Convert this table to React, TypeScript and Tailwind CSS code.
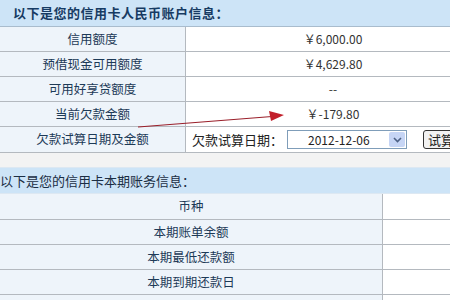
import React from 'react';

const font = { fontFamily: '"Noto Sans CJK SC", "Noto Sans", sans-serif' };

function Row({ label, children, h = 'h-[25px]' }: { label: string; children?: React.ReactNode; h?: string }) {
  return (
    <div className={`flex ${h} border-b border-[#b4b9bf]`}>
      <div className="w-[186px] shrink-0 bg-[#eef4fa] border-r border-[#b4b9bf] flex items-center justify-center text-[12.5px] text-[#1d3a57]">
        {label}
      </div>
      <div className="flex-1 bg-white flex items-center justify-center text-[12px] text-[#333]">{children}</div>
    </div>
  );
}

function BillRow({ label, h = 'h-[25px]' }: { label: string; h?: string }) {
  return (
    <div className={`flex ${h} border-b border-[#b4b9bf]`}>
      <div className="w-[383px] shrink-0 bg-[#eef4fa] border-r border-[#b4b9bf] flex items-center justify-center text-[12.5px] text-[#1d3a57]">
        {label}
      </div>
      <div className="flex-1 bg-white" />
    </div>
  );
}

export default function App() {
  return (
    <div className="relative w-[450px] h-[300px] overflow-hidden bg-white" style={font}>
      <div className="w-[480px]">
        {/* account info */}
        <div className="h-[27px] bg-[#cde4f7] border-b border-[#a9bccd] flex items-center pl-[13px] text-[13px] font-bold text-[#173b63] tracking-[0.5px]">
          以下是您的信用卡人民币账户信息：
        </div>
        <Row label="信用额度">￥6,000.00</Row>
        <Row label="预借现金可用额度">￥4,629.80</Row>
        <Row label="可用好享贷额度">--</Row>
        <Row label="当前欠款金额">￥-179.80</Row>
        <div className="flex h-[26px] border-b border-[#b4b9bf]">
          <div className="w-[186px] shrink-0 bg-[#eef4fa] border-r border-[#b4b9bf] flex items-center justify-center text-[12.5px] text-[#1d3a57]">
            欠款试算日期及金额
          </div>
          <div className="flex-1 bg-white flex items-center pl-[6px] text-[13px] text-[#222]">
            <span>欠款试算日期：</span>
            <div className="ml-[4px] w-[120px] h-[19px] border border-[#7f9db9] flex items-center bg-white">
              <span className="flex-1 pl-[20px] text-[12px]">2012-12-06</span>
              <span className="w-[16px] h-[15px] mr-[1px] bg-[#c6d5f5] rounded-[2px] flex items-center justify-center">
                <svg width="9" height="6" viewBox="0 0 9 6">
                  <path d="M1 1 L4.5 4.5 L8 1" fill="none" stroke="#4d6185" strokeWidth="1.6" />
                </svg>
              </span>
            </div>
            <div className="ml-[16px] h-[19px] px-[4px] border border-[#333] rounded-[3px] bg-[#f2f2f2] flex items-center text-[13px] shrink-0">
              试算
            </div>
          </div>
        </div>
        <div className="h-[14px] bg-[#f3f3f3]" />

        {/* bill info */}
        <div className="h-[27px] bg-[#cde4f7] border-t border-[#dde8f2] border-b border-[#a9bccd] flex items-center text-[13px] text-[#1b2e44]">
          以下是您的信用卡本期账务信息：
        </div>
        <BillRow label="币种" h="h-[26px]" />
        <BillRow label="本期账单余额" />
        <BillRow label="本期最低还款额" />
        <BillRow label="本期到期还款日" />
        <BillRow label="" />
      </div>

      {/* red annotation arrow */}
      <svg className="absolute left-0 top-0 pointer-events-none" width="450" height="300">
        <line x1="138" y1="127" x2="272" y2="116.5" stroke="#9a1f2a" strokeWidth="1.2" />
        <polygon points="284,115 269,111 271,121" fill="#c2202b" />
      </svg>
    </div>
  );
}
